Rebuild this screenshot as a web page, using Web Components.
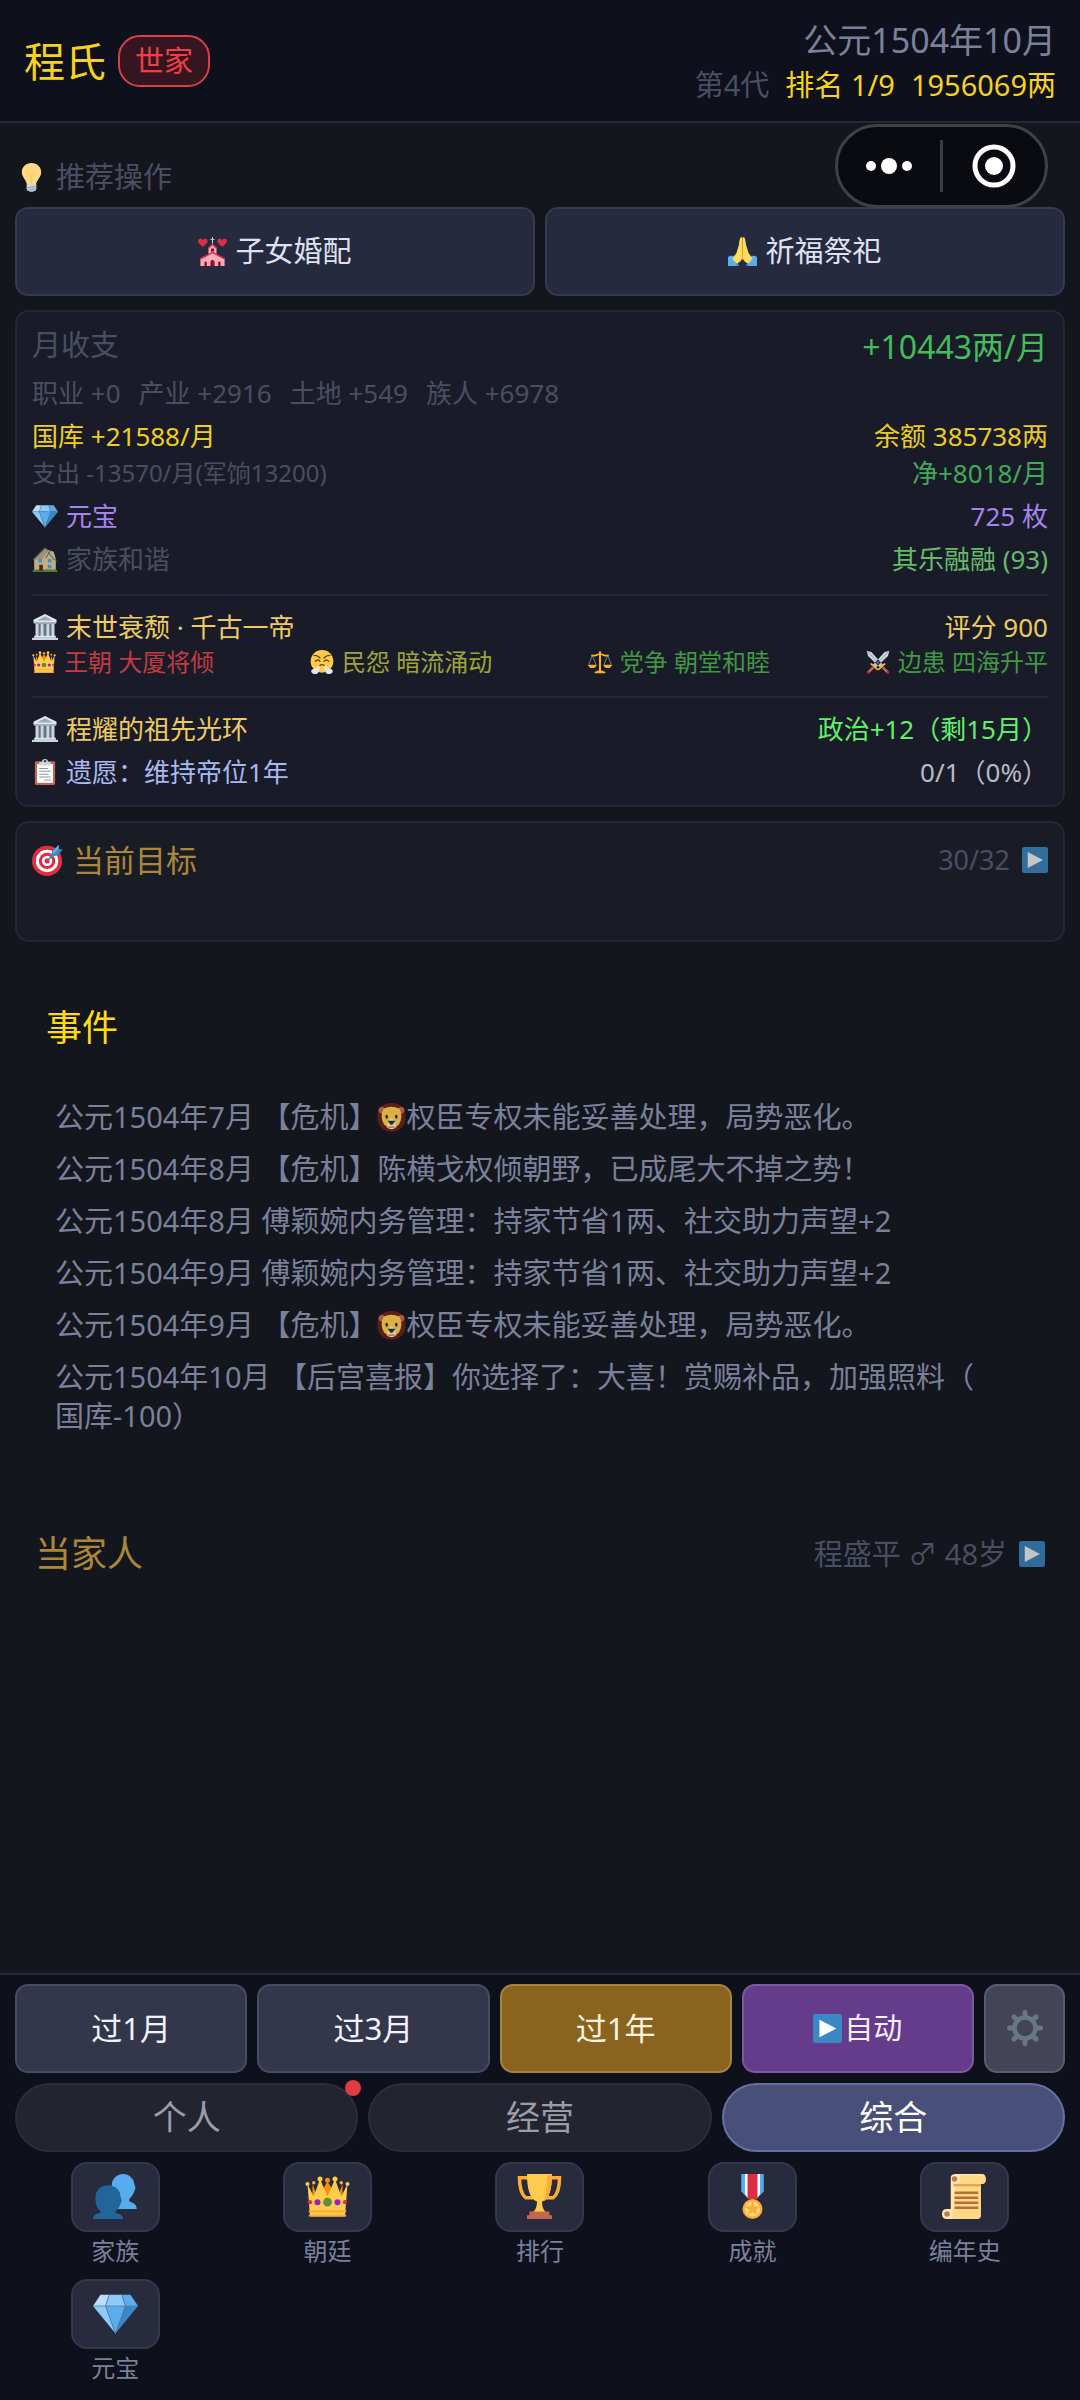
<!DOCTYPE html>
<html lang="zh-CN">
<head>
<meta charset="utf-8">
<meta name="viewport" content="width=device-width, initial-scale=1">
<title>程氏世家</title>
<style>
  :root {
    --gold: #f5d21f;
    --muted: #4a4e63;
    --text: #7b809b;
    --line: #252836;
    --bar: #0e101b;
  }

  body {
    margin: 0;
    background: #13161d;
    color: var(--text);
    font-family: "Noto Sans", "Noto Sans CJK SC", sans-serif;
    font-size: 29px;
  }
</style>
</head>
<body>
<game-app></game-app>

<script>
// All icons share a 36x36 grid
const icons = {
  bulb: `
    <path fill="#ffd983" d="M30 11.5C30 18 25 20 23.5 27h-11C11 20 6 18 6 11.5 6 5 11 0 18 0s12 5 12 11.5z"/>
    <path fill="none" stroke="#ffcc4d" stroke-width="1.6" d="M13 12l5 5 5-5M18 17v10"/>
    <path fill="#ccd6dd" d="M12 26h12v6a3 3 0 0 1-3 3h-6a3 3 0 0 1-3-3z"/>
    <path fill="none" stroke="#99aab5" stroke-width="1.6" d="M12 31l12-2M13 34l10-2"/>
    <path fill="#99aab5" d="M15 34h6l-1 2h-4z"/>`,
  wedding: `
    <path fill="#dd2e44" d="M6 12C2 9 0 7 0 5c0-3 4-4 6-1 2-3 6-2 6 1 0 2-2 4-6 7zM30 12c-4-3-6-5-6-7 0-3 4-4 6-1 2-3 6-2 6 1 0 2-2 4-6 7z"/>
    <path stroke="#ccd6dd" stroke-width="1.2" d="M18 0v9M15.500 3h5"/>
    <path fill="#f4abba" d="M13 13l5-4 5 4v9l10 5v9H3v-9l10-5z"/>
    <path fill="none" stroke="#dd2e44" stroke-width="1.8" d="M13 14l5-5 5 5M3 27l10-5 5-3 5 3 10 5"/>
    <path fill="#a0041e" d="M16 18v-2a2 2 0 0 1 4 0v2zM15.500 36v-5a2.500 2.500 0 0 1 5 0v5zM8 36v-4a1.500 1.500 0 0 1 3 0v4zM25 36v-4a1.500 1.500 0 0 1 3 0v4z"/>`,
  pray: `
    <path fill="#3b88c3" d="M0 25l8-2 6 13H0zM36 25l-8-2-6 13h14z"/>
    <path fill="#5dadec" d="M0 25c2-2 5-2 7-1l4 12H0zM36 25c-2-2-5-2-7-1l-4 12h11z"/>
    <path fill="#ffdc5d" d="M17.500 0c-3 0-3 4-4 10l-3 10-5 7 5 6c4-1 6-4 7.500-7zM18.500 0c3 0 3 4 4 10l3 10 5 7-5 6c-4-1-6-4-7.500-7z"/>
    <path stroke="#ef9645" stroke-width="1" d="M18 1v28"/>`,
  gem: `
    <path fill="#bdddf4" d="M6 3h7l-3 9H0z"/>
    <path fill="#8ccaf7" d="M13 3h10l3 9H10z"/>
    <path fill="#5dadec" d="M23 3h7l6 9H26z"/>
    <path fill="#8ccaf7" d="M0 12h10l8 22z"/>
    <path fill="#5dadec" d="M10 12h16l-8 22z"/>
    <path fill="#3b88c3" d="M26 12h10L18 34z"/>
    <path fill="none" stroke="#4a7ba6" stroke-width=".6" d="M0 12h36M13 3l-3 9 8 22 8-22-3-9"/>`,
  house: `
    <path fill="#5c913b" d="M1 33h34v3H1z"/>
    <path fill="#e8d49a" d="M3 18L18 4l12 4 3 10v15H3z"/>
    <path fill="#c4b08c" d="M2 19L18 3l5 3-9 13z"/>
    <path fill="none" stroke="#66757f" stroke-width="1.400" d="M2 19L18 3l4 3M22 8l8 10 4 2M25 7l-6 10"/>
    <path fill="#662113" d="M10 26h5v8h-5z"/>
    <path fill="#5dadec" d="M9 18h5v5H9zM22 18h5v5h-5zM22 26h5v5h-5z"/>`,
  temple: `
    <path fill="#e1e8ed" d="M18 0L2 8v4h32V8z"/>
    <path fill="#99aab5" d="M18 3L7 9h22zM3 12h30v2H3z"/>
    <path fill="#657786" d="M5 14h26v16H5z"/>
    <path fill="#ccd6dd" d="M5 14h4v17H5zM12 14h4v17h-4zM20 14h4v17h-4zM27 14h4v17h-4z"/>
    <path fill="#e1e8ed" d="M3 30h30v3H3z"/>
    <path fill="#ccd6dd" d="M0 33h36v3H0z"/>`,
  crown: `
    <path fill="#f4900c" d="M6 8l4 11 8-13 8 13 4-11v15H6z"/>
    <path fill="#ffcc4d" d="M2 8l5 10 5-14 6 14 6-14 5 14 5-10-2 26H4z"/>
    <circle fill="#ffac33" cx="7" cy="7" r="1.400"/><circle fill="#f4900c" cx="18" cy="5" r="2"/><circle fill="#ffac33" cx="29" cy="7" r="1.400"/>
    <circle fill="#ffcc4d" cx="2" cy="8" r="1.600"/><circle fill="#ffcc4d" cx="12" cy="4" r="2"/><circle fill="#ffcc4d" cx="24" cy="4" r="2"/><circle fill="#ffcc4d" cx="34" cy="8" r="1.600"/>
    <path fill="#ffac33" d="M3 29h30v1.500H3zM3 32.500h30V34H3z"/>
    <circle fill="#5c913b" cx="18" cy="22.500" r="3.500"/>
    <circle fill="#9e1fc0" cx="10" cy="22.500" r="2.400"/><circle fill="#9e1fc0" cx="26" cy="22.500" r="2.400"/>
    <circle fill="#dd2e44" cx="4" cy="22.500" r="1.700"/><circle fill="#dd2e44" cx="32" cy="22.500" r="1.700"/>`,
  steam: `
    <circle fill="#ffcc4d" cx="18" cy="17" r="17"/>
    <path fill="none" stroke="#664500" stroke-width="2" stroke-linecap="round" d="M6 8q6 0 9 4M30 8q-6 0-9 4M8 17q4-4 7 0M28 17q-4-4-7 0M15 23q3-2 6 0"/>
    <path fill="#e1e8ed" d="M15 24c0 5-2 7-3 11-3 2-9 1-10-2-1-4 3-5 5-5 2-1 5-3 8-4zM21 24c0 5 2 7 3 11 3 2 9 1 10-2 1-4-3-5-5-5-2-1-5-3-8-4z"/>`,
  scales: `
    <path fill="#ffac33" d="M16.500 2h3v30h-3zM10 33q8-5 16 0v2H10zM0 22h13q-1 5-6.500 5T0 22zM23 22h13q-1 5-6.500 5T23 22z"/>
    <path fill="none" stroke="#ffac33" stroke-width="2.600" d="M5 8q6 1 9-1 4-2 8 0 3 2 9 1"/>
    <path fill="none" stroke="#9aaab4" stroke-width="1" d="M6 9L1 22M7 9l5 13M29 9l-5 13M30 9l5 13"/>`,
  swords: `
    <path fill="#ccd6dd" d="M1 1l7 2 18 20-4 4L3 9zM35 1l-7 2L10 23l4 4L33 9z"/>
    <path stroke="#8899a6" stroke-width="1.200" d="M2 2l22 23M34 2L12 25"/>
    <path fill="none" stroke="#ffac33" stroke-width="2.600" stroke-linecap="round" d="M19 29l9-8M17 29l-9-8"/>
    <path stroke="#bf6952" stroke-width="4" d="M25 26l8 8M11 26l-8 8"/>
    <circle fill="#be1931" cx="33" cy="34" r="2"/><circle fill="#be1931" cx="3" cy="34" r="2"/>`,
  clipboard: `
    <rect fill="#c1694f" x="4" y="3" width="28" height="33" rx="2"/>
    <path fill="#fff" d="M7 7h22v26H7z"/>
    <path fill="#ccd6dd" d="M10 4h4a4 4 0 0 1 8 0h4v5H10z"/>
    <circle fill="#292f33" cx="18" cy="3" r="1.600"/>
    <path stroke="#8899a6" stroke-width="1.400" d="M10 13h12M10 17h16M10 21h13M10 25h16M17 29h9"/>`,
  target: `
    <circle fill="#dd2e44" cx="17.500" cy="18.500" r="17.500"/><circle fill="#fff" cx="17.500" cy="18.500" r="13"/>
    <circle fill="#dd2e44" cx="17.500" cy="18.500" r="9.500"/><circle fill="#fff" cx="17.500" cy="18.500" r="6"/>
    <circle fill="#dd2e44" cx="17.500" cy="18.500" r="3"/>
    <path stroke="#3b88c3" stroke-width="2" d="M18 18l9-9"/>
    <path fill="#3b88c3" d="M21 14l3-8 7-6v5h5l-6 7z"/>
    <path fill="#5dadec" d="M24 11l1-5 6-6v5z"/>`,
  play: `
    <rect fill="#3b88c3" width="36" height="36" rx="3"/>
    <path fill="#fff" d="M8 7l21 11L8 29z"/>`,
  lion: `
    <path fill="#662113" d="M18 0c8 0 13 3 16 8 3 7 2 15-2 21-3 4-8 7-14 7S7 33 4 29C0 23-1 15 2 8 5 3 10 0 18 0z"/>
    <circle fill="#c1694f" cx="6" cy="9" r="4"/><circle fill="#c1694f" cx="30" cy="9" r="4"/>
    <path fill="#ffcc4d" d="M8 7q10-5 20 0 5 10-1 20-9 8-18 0Q3 17 8 7z"/>
    <path fill="#ffe8b6" d="M13 24l5-6 5 6 1 6q-6 5-12 0z"/>
    <ellipse fill="#292f33" cx="12" cy="17" rx="1.600" ry="2.400"/><ellipse fill="#292f33" cx="24" cy="17" rx="1.600" ry="2.400"/>
    <path fill="#292f33" d="M13 22h10l-4 5h-2z"/>
    <path stroke="#c1694f" stroke-width="1.400" d="M14 30h8"/>`,
  gear: `
    <g stroke="#677884" stroke-linecap="round">
      <circle fill="none" cx="18" cy="18" r="10.500" stroke-width="4.500"/>
      <path stroke-width="5" d="M18 2.500v4M18 29.500v4M2.500 18h4M29.500 18h4M7 7l2 2M27 27l2 2M7 29l2-2M27 9l2-2"/>
    </g>`,
  people: `
    <path fill="#55acee" d="M15 9c0-5 4-9 9-9s9 4 9 8l1 3-1 3c-1 3-3 5-4 6v2c4 1 6 3 6 6H17z"/>
    <path fill="#226699" d="M2 19c0-6 4-10 10-10s10 4 10 9l1 3-1 3c-1 3-3 5-4 6v1c4 1 6 2 6 5H0c0-3 2-4 6-5v-1c-3-3-4-6-4-11z"/>`,
  trophy: `
    <path fill="none" stroke="#ffac33" stroke-width="2.800" d="M9 3H2q0 12 5 16h6M27 3h7q0 12-5 16h-6"/>
    <path fill="#ffcc4d" d="M8 0h20c0 11-2 20-8 22 0 4 1 7 4 9H12c3-2 4-5 4-9C10 20 8 11 8 0z"/>
    <path fill="#ffac33" d="M24 1h4c0 10-2 19-7 21 3-5 3-12 3-21z"/>
    <path fill="#c1694f" d="M10 30h16v3h2v3H8v-3h2z"/>`,
  medal: `
    <path fill="#55acee" d="M9 0h18v14l-5 5h-8l-5-5z"/>
    <path fill="#fff" d="M12 0h12v16l-2 3h-8l-2-3z"/>
    <path fill="#dd2e44" d="M14 0h8v20h-8z"/>
    <circle fill="#ffac33" cx="18" cy="28" r="8"/><circle fill="#ffd983" cx="18" cy="28" r="6"/>
    <path fill="#ffac33" d="M18 22l1.700 4h4.300l-3.400 2.700 1.200 4.200L18 30.400l-3.800 2.500 1.200-4.200L12 26h4.300z"/>`,
  scroll: `
    <path fill="#ffe8b6" d="M7 3q0-3 4-3h21q3 0 3 4t-4 4v25q0 3-3 3H4q-4 0-4-4t4-4h3z"/>
    <path fill="#ffd983" d="M11 8h20v25q0 3-3 3H8z"/>
    <path fill="#ffd983" d="M14 1h18q3 0 3 3.500T32 8H12q3-3 2-7z"/>
    <path fill="#e8a551" d="M9 8h22v2H9z"/>
    <circle fill="#bf7a50" cx="10" cy="4" r="2.200"/><circle fill="#bf7a50" cx="4" cy="32" r="2.200"/>
    <path stroke="#b5703c" stroke-width="2" d="M10 15h19M10 19h19M10 23h19M10 27h19"/>`
};

/**
 * Inline picture, sized by the font-size around it.
 */
class GameIcon extends HTMLElement {
  shadowRoot = this.attachShadow({ mode: 'open' });

  connectedCallback () {
    this.shadowRoot.innerHTML = `
      <style>
        :host { display: inline-block; flex: none; width: 1em; height: 1em; }
        svg { display: block; width: 100%; height: 100%; overflow: visible; }
      </style>
      <svg viewBox="0 0 36 36" aria-hidden="true">${icons[this.getAttribute('name')]}</svg>
    `;
  }
}

/**
 * Top bar: family name and rank badge on the left, date and standing on the right.
 */
class GameHeader extends HTMLElement {
  shadowRoot = this.attachShadow({ mode: 'open' });

  connectedCallback () {
    this.shadowRoot.innerHTML = `
      <style>
        :host { display: block; background: var(--bar); border-bottom: 2px solid var(--line); }
        header {
          display: flex;
          align-items: center;
          justify-content: space-between;
          padding: 16px 24px 15px;
        }
        .family { display: flex; align-items: center; gap: 12px; }
        h1 { margin: 0; font-size: 41px; line-height: 52px; font-weight: 400; color: var(--gold); }
        .badge {
          padding: 0 15px;
          border: 2px solid #dc3f48;
          border-radius: 22px;
          background: #35151f;
          color: #ee4047;
          line-height: 48px;
        }
        .status { text-align: right; }
        .date { font-size: 34px; line-height: 48px; }
        .standing { display: flex; justify-content: flex-end; gap: 16px; line-height: 42px; color: var(--gold); }
        .generation { color: var(--muted); }
      </style>
      <header>
        <div class="family">
          <h1><slot name="family"></slot></h1>
          <span class="badge"><slot name="badge"></slot></span>
        </div>
        <div class="status">
          <div class="date"><slot name="date"></slot></div>
          <div class="standing">
            <span class="generation"><slot name="generation"></slot></span>
            <slot name="rank"></slot>
            <slot name="wealth"></slot>
          </div>
        </div>
      </header>
    `;
  }
}

/**
 * Floating host menu, drawn over the page content.
 */
class MenuCapsule extends HTMLElement {
  shadowRoot = this.attachShadow({ mode: 'open' });

  connectedCallback () {
    this.shadowRoot.innerHTML = `
      <style>
        :host {
          position: absolute;
          top: 124px;
          right: 32px;
          z-index: 2;
          display: flex;
          align-items: center;
          box-sizing: border-box;
          width: 213px;
          height: 84px;
          border: 3px solid #404145;
          border-radius: 42px;
          background: #0a0b10;
        }
        button { flex: 1; display: flex; justify-content: center; padding: 0; border: 0; background: none; }
        i { width: 3px; height: 52px; background: #3c3d42; }
        svg { display: block; fill: #fff; }
      </style>
      <button aria-label="更多">
        <svg width="48" height="48"><circle cx="6" cy="24" r="5"/><circle cx="24" cy="24" r="8"/><circle cx="42" cy="24" r="5"/></svg>
      </button>
      <i></i>
      <button aria-label="关闭">
        <svg width="48" height="48"><circle cx="24" cy="24" r="19" fill="none" stroke="#fff" stroke-width="5"/><circle cx="24" cy="24" r="9"/></svg>
      </button>
    `;
  }
}

/**
 * Rectangular button. The tone attribute picks its colours.
 */
class GameButton extends HTMLElement {
  shadowRoot = this.attachShadow({ mode: 'open' });

  connectedCallback () {
    this.shadowRoot.innerHTML = `
      <style>
        :host { display: flex; flex: 1; --fill: #262a3e; --edge: #363a4c; --ink: #dfe1f3; }
        :host([tone="month"]) { --fill: #33374c; --edge: #484c60; --ink: #f1f2fb; }
        :host([tone="year"]) { --fill: #8a641e; --edge: #a4853f; --ink: #fdf3e0; }
        :host([tone="auto"]) { --fill: #653b8b; --edge: #7d5a9d; --ink: #f7effc; }
        :host([tone="settings"]) { flex: 0 0 81px; --fill: #434556; --edge: #5b5d6d; }
        button {
          display: flex;
          align-items: center;
          justify-content: center;
          gap: var(--gap, 8px);
          width: 100%;
          padding: 21px 0 22px;
          border: 2px solid var(--edge);
          border-radius: 13px;
          background: var(--fill);
          color: var(--ink);
          font: inherit;
          line-height: 42px;
        }
      </style>
      <button aria-label="${this.getAttribute('label') || this.textContent.trim()}"><slot></slot></button>
    `;
  }
}

/**
 * Bordered card.
 */
class GameCard extends HTMLElement {
  shadowRoot = this.attachShadow({ mode: 'open' });

  connectedCallback () {
    this.shadowRoot.innerHTML = `
      <style>
        :host {
          display: block;
          padding: 13px 15px 15px;
          border: 2px solid #232636;
          border-radius: 14px;
          background: #191c28;
        }
      </style>
      <slot></slot>
    `;
  }
}

/**
 * One line of a card: label on the left, value on the right.
 */
class StatRow extends HTMLElement {
  shadowRoot = this.attachShadow({ mode: 'open' });

  connectedCallback () {
    const icon = this.getAttribute('icon');

    this.shadowRoot.innerHTML = `
      <style>
        :host {
          display: flex;
          justify-content: space-between;
          margin-top: 7px;
          font-size: 26px;
          line-height: 36px;
        }
        :host([flush]) { margin-top: 0; }
        :host([large]) { font-size: 32px; line-height: 43px; }
        :host([large]) .label { align-items: flex-start; font-size: 29px; line-height: 40px; }
        :host([small]) { margin-top: 1px; }
        :host([small]) .label { font-size: 24px; }
        .label { display: flex; align-items: center; gap: 8px; color: var(--label, var(--muted)); }
        .value { color: var(--value); }
        .faded { opacity: .8; }
      </style>
      <span class="label">
        ${icon ? `<game-icon name="${icon}" class="${icon === 'house' ? 'faded' : ''}"></game-icon>` : ''}
        <span><slot></slot></span>
      </span>
      <span class="value"><slot name="value"></slot></span>
    `;
  }
}

/**
 * Heading line with a side note and an expand arrow.
 */
class FoldHeading extends HTMLElement {
  shadowRoot = this.attachShadow({ mode: 'open' });

  connectedCallback () {
    this.shadowRoot.innerHTML = `
      <style>
        :host { display: flex; align-items: center; justify-content: space-between; }
        h2 {
          display: flex;
          align-items: center;
          gap: 10px;
          margin: 0;
          font-size: inherit;
          font-weight: 400;
          color: #ac8738;
        }
        button {
          display: flex;
          align-items: center;
          gap: 12px;
          padding: 0;
          border: 0;
          background: none;
          color: var(--muted);
          font: inherit;
          font-size: 29px;
        }
        :host([compact]) button { font-size: 27px; }
        button game-icon { font-size: 26px; opacity: .75; }
      </style>
      <h2><slot></slot></h2>
      <button><slot name="note"></slot><game-icon name="play"></game-icon></button>
    `;
  }
}

/**
 * Event log. Items are passed in as list elements.
 */
class EventLog extends HTMLElement {
  shadowRoot = this.attachShadow({ mode: 'open' });

  connectedCallback () {
    this.shadowRoot.innerHTML = `
      <style>
        :host { display: block; }
        h2 { margin: 0 0 44px; font-size: 36px; line-height: 50px; font-weight: 400; color: #ffdb0f; }
        ul {
          display: flex;
          flex-direction: column;
          gap: 13px;
          margin: 0;
          padding: 0 48px 0 9px;
          list-style: none;
          line-height: 39px;
          line-break: anywhere;
        }
        ::slotted(li) { display: block; }
      </style>
      <h2>事件</h2>
      <ul><slot></slot></ul>
    `;
  }
}

/**
 * Pill tab of the bottom bar, with an optional red notice dot.
 */
class GameTab extends HTMLElement {
  shadowRoot = this.attachShadow({ mode: 'open' });

  connectedCallback () {
    this.shadowRoot.innerHTML = `
      <style>
        :host { display: block; flex: 1; position: relative; }
        button {
          display: block;
          width: 100%;
          padding: 8px 0 9px;
          border: 2px solid #2b2d38;
          border-radius: 35px;
          background: #22242f;
          color: #9b9da8;
          font: inherit;
          font-size: 34px;
          line-height: 48px;
        }
        :host([active]) button { border-color: #6670a3; background: #485079; color: #fff; }
        :host([notice])::after {
          content: "";
          position: absolute;
          top: -3px;
          right: -3px;
          width: 16px;
          height: 16px;
          border-radius: 50%;
          background: #e03c40;
        }
      </style>
      <button aria-pressed="${this.hasAttribute('active')}"><slot></slot></button>
    `;
  }
}

/**
 * Shortcut with a framed icon and a caption.
 */
class ToolItem extends HTMLElement {
  shadowRoot = this.attachShadow({ mode: 'open' });

  connectedCallback () {
    this.shadowRoot.innerHTML = `
      <style>
        :host { display: flex; justify-content: center; }
        button {
          display: flex;
          flex-direction: column;
          align-items: center;
          gap: 5px;
          padding: 0;
          border: 0;
          background: none;
          color: var(--text);
          font: inherit;
          font-size: 24px;
          line-height: 28px;
        }
        .frame {
          padding: 10px 20px 11px;
          border: 2px solid #35384a;
          border-radius: 16px;
          background: #282b3e;
        }
        game-icon { display: block; font-size: 45px; }
      </style>
      <button>
        <span class="frame"><game-icon name="${this.getAttribute('icon')}"></game-icon></span>
        <span><slot></slot></span>
      </button>
    `;
  }
}

/**
 * The whole screen.
 */
class GameApp extends HTMLElement {
  shadowRoot = this.attachShadow({ mode: 'open' });

  connectedCallback () {
    this.shadowRoot.innerHTML = `
      ${this.getStyles()}
      <game-header>
        <span slot="family">程氏</span>
        <span slot="badge">世家</span>
        <span slot="date">公元1504年10月</span>
        <span slot="generation">第4代</span>
        <span slot="rank">排名 1/9</span>
        <span slot="wealth">1956069两</span>
      </game-header>
      <menu-capsule></menu-capsule>

      <main>
        <div class="tip"><game-icon name="bulb"></game-icon><span>推荐操作</span></div>
        <div class="row">
          <game-button><game-icon name="wedding"></game-icon><span>子女婚配</span></game-button>
          <game-button><game-icon name="pray"></game-icon><span>祈福祭祀</span></game-button>
        </div>

        <game-card>
          <stat-row large flush style="--value: #45bb5c">月收支<span slot="value">+10443两/月</span></stat-row>
          <div class="income"><span>职业 +0</span><span>产业 +2916</span><span>土地 +549</span><span>族人 +6978</span></div>
          <stat-row style="--label: #f0cf22; --value: #eccb25">国库 +21588/月<span slot="value">余额 385738两</span></stat-row>
          <stat-row small style="--value: #42a957">支出 -13570/月(军饷13200)<span slot="value">净+8018/月</span></stat-row>
          <stat-row icon="gem" style="--label: #a783ee; --value: #a783ee">元宝<span slot="value">725 枚</span></stat-row>
          <stat-row icon="house" style="--value: #66bb6a">家族和谐<span slot="value">其乐融融 (93)</span></stat-row>
          <hr>
          <stat-row flush icon="temple" style="--label: #edcb62; --value: #edcb62">末世衰颓 · 千古一帝<span slot="value">评分 900</span></stat-row>
          <div class="realm">
            <span style="color: #c23b43"><game-icon name="crown"></game-icon>王朝 大厦将倾</span>
            <span style="color: #9fa43a"><game-icon name="steam"></game-icon>民怨 暗流涌动</span>
            <span style="color: #419844"><game-icon name="scales"></game-icon>党争 朝堂和睦</span>
            <span style="color: #419844"><game-icon name="swords"></game-icon>边患 四海升平</span>
          </div>
          <hr>
          <stat-row flush icon="temple" style="--label: #edcb62; --value: #62f06c">程耀的祖先光环<span slot="value">政治+12（剩15月）</span></stat-row>
          <stat-row icon="clipboard" style="--label: #aab8f0; --value: #b9bbc4">遗愿：维持帝位1年<span slot="value">0/1（0%）</span></stat-row>
        </game-card>

        <game-card class="goal">
          <fold-heading compact><game-icon name="target"></game-icon><span>当前目标</span><span slot="note">30/32</span></fold-heading>
        </game-card>

        <event-log>
          <li>公元1504年7月 【危机】<game-icon name="lion"></game-icon>权臣专权未能妥善处理，局势恶化。</li>
          <li>公元1504年8月 【危机】陈横戈权倾朝野，已成尾大不掉之势！</li>
          <li>公元1504年8月 傅颖婉内务管理：持家节省1两、社交助力声望+2</li>
          <li>公元1504年9月 傅颖婉内务管理：持家节省1两、社交助力声望+2</li>
          <li>公元1504年9月 【危机】<game-icon name="lion"></game-icon>权臣专权未能妥善处理，局势恶化。</li>
          <li>公元1504年10月 【后宫喜报】你选择了：大喜！赏赐补品，加强照料（国库-100）</li>
        </event-log>

        <fold-heading class="head">当家人<span slot="note">程盛平 ♂ 48岁</span></fold-heading>
      </main>

      <footer>
        <div class="row time">
          <game-button tone="month">过1月</game-button>
          <game-button tone="month">过3月</game-button>
          <game-button tone="year">过1年</game-button>
          <game-button tone="auto"><game-icon name="play"></game-icon><span>自动</span></game-button>
          <game-button tone="settings" label="设置"><game-icon name="gear"></game-icon></game-button>
        </div>
        <nav class="row">
          <game-tab notice>个人</game-tab>
          <game-tab>经营</game-tab>
          <game-tab active>综合</game-tab>
        </nav>
        <div class="tools">
          <tool-item icon="people">家族</tool-item>
          <tool-item icon="crown">朝廷</tool-item>
          <tool-item icon="trophy">排行</tool-item>
          <tool-item icon="medal">成就</tool-item>
          <tool-item icon="scroll">编年史</tool-item>
          <tool-item icon="gem">元宝</tool-item>
        </div>
      </footer>
    `;
  }

  getStyles () {
    return `
      <style>
        :host { position: relative; display: flex; flex-direction: column; min-height: 100vh; }
        main { flex: 1; padding: 34px 15px 40px; }
        .row { display: flex; gap: 10px; }
        .tip {
          display: flex;
          align-items: center;
          gap: 10px;
          margin-bottom: 10px;
          padding-left: 2px;
          line-height: 40px;
          color: var(--muted);
        }
        game-card { margin-top: 14px; }
        .income {
          display: flex;
          gap: 18px;
          margin-top: 7px;
          font-size: 26px;
          line-height: 36px;
          color: var(--muted);
        }
        .realm {
          display: flex;
          justify-content: space-between;
          font-size: 24px;
          line-height: 34px;
        }
        .realm span { display: flex; align-items: center; gap: 8px; }
        hr { margin: 17px 0 13px; border: 0; border-top: 2px solid #242734; }
        .goal {
          padding-top: 17px;
          padding-bottom: 60px;
          background: #191c25;
          font-size: 31px;
          line-height: 40px;
        }
        event-log { margin: 61px 31px 0; }
        li game-icon { vertical-align: -4px; opacity: .85; }
        .head { margin: 94px 20px 0; font-size: 36px; line-height: 50px; }
        footer {
          display: flex;
          flex-direction: column;
          gap: 10px;
          padding: 9px 15px 18px;
          border-top: 2px solid var(--line);
          background: var(--bar);
        }
        .time { font-size: 31px; --gap: 2px; }
        [tone="auto"] { font-size: 29px; }
        [tone="settings"] { font-size: 36px; }
        .tools {
          display: grid;
          grid-template-columns: repeat(5, 1fr);
          gap: 14px 12px;
        }
      </style>
    `;
  }
}

customElements.define('game-icon', GameIcon);
customElements.define('game-header', GameHeader);
customElements.define('menu-capsule', MenuCapsule);
customElements.define('game-button', GameButton);
customElements.define('game-card', GameCard);
customElements.define('stat-row', StatRow);
customElements.define('fold-heading', FoldHeading);
customElements.define('event-log', EventLog);
customElements.define('game-tab', GameTab);
customElements.define('tool-item', ToolItem);
customElements.define('game-app', GameApp);
</script>
</body>
</html>
